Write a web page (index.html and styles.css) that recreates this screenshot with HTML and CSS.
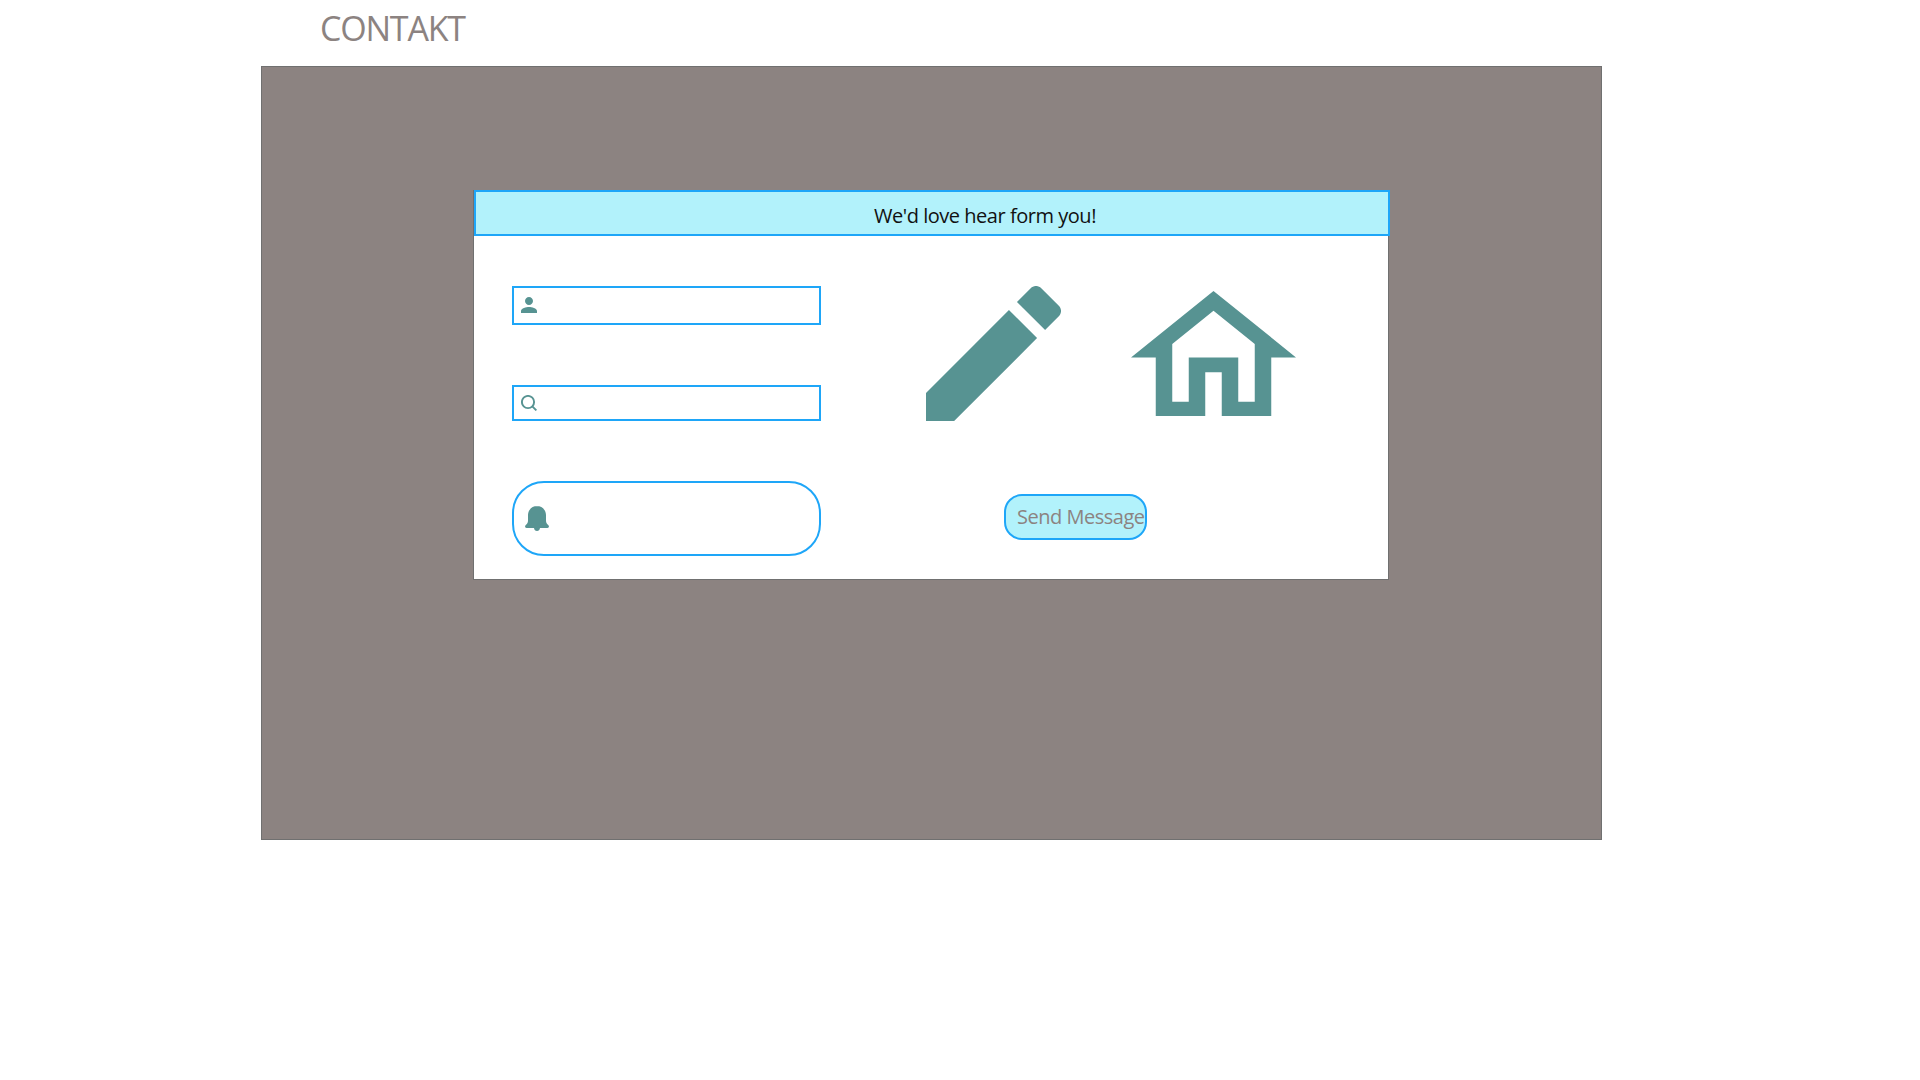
FILE: index.html
```html
<!DOCTYPE html>
<html lang="en">
<head>
<meta charset="utf-8">
<title>Kontakt</title>
<link rel="stylesheet" href="styles.css">
</head>
<body>
<h1 class="title">CONTAKT</h1>
<main class="panel">
  <section class="card">
    <h2 class="banner"><span>We'd love hear form you!</span></h2>
    <div class="content">
      <div class="fields">
        <div class="field field-name">
          <svg class="icon-person" viewBox="4 4 16 16"><path d="M12 12c2.21 0 4-1.79 4-4s-1.790-4-4-4-4 1.790-4 4 1.790 4 4 4zm0 2c-2.670 0-8 1.340-8 4v2h16v-2c0-2.660-5.330-4-8-4z"/></svg>
        </div>
        <div class="field field-search">
          <svg class="icon-search" viewBox="0 0 16 16"><circle cx="7" cy="7" r="6.100"/><path d="M11.300 11.300L15.400 15.400"/></svg>
        </div>
        <div class="field field-message">
          <svg class="icon-bell" viewBox="0 0 24 25"><path d="M12 0C7 0 3 4 3 9v5.500c0 2-.6 3-2.200 4.500C-.5 20.200 0 22 1.600 22H9c.2 1.800 1.400 3 3 3s2.800-1.200 3-3h7.400c1.600 0 2.100-1.800.8-3-1.600-1.500-2.200-2.500-2.200-4.500V9c0-5-4-9-9-9z"/></svg>
        </div>
      </div>
      <div class="side">
        <div class="pictures">
          <svg class="icon-pencil" viewBox="3 3 18 18"><path d="M3 17.250V21h3.750L17.810 9.940l-3.750-3.750L3 17.250zM20.710 7.040c.39-.39.39-1.020 0-1.410l-2.340-2.340c-.39-.39-1.020-.39-1.410 0l-1.830 1.830 3.750 3.750 1.830-1.830z"/></svg>
          <svg class="icon-home" viewBox="2 3 20 17" preserveAspectRatio="none"><path d="M12 5.690l5 4.500V18h-2v-6H9v6H7v-7.810l5-4.500M12 3L2 12h3v8h6v-6h2v6h6v-8h3L12 3z"/></svg>
        </div>
        <button class="send" type="button">Send Message</button>
      </div>
    </div>
  </section>
</main>
</body>
</html>
```
FILE: styles.css
```css
* { box-sizing: border-box; }

body {
  margin: 0;
  background: #fff;
  font-family: "Open Sans", "Noto Sans", sans-serif;
}

svg {
  display: block;
  fill: #579392;
}

.title {
  height: 66px;
  margin: 0;
  padding-left: 320px;
  font-size: 34px;
  font-weight: 400;
  line-height: 56px;
  letter-spacing: -1.2px;
  color: #8c8381;
}

.panel {
  display: flex;
  width: 1341px;
  height: 774px;
  margin-left: 261px;
  padding: 123px 0 0 211px;
  background: #8c8381;
  border: 1px solid #707070;
}

.card {
  width: 916px;
  height: 390px;
  background: #fff;
  border: 1px solid #707070;
}

.banner {
  width: 916px;
  height: 46px;
  margin: -1px 0 0;
  padding-left: 398px;
  background: #b2f2fb;
  border: 2px solid #1ea6f8;
  font-size: 20px;
  font-weight: 400;
  line-height: 47px;
  letter-spacing: -0.47px;
  white-space: nowrap;
  color: #111;
}

.content {
  display: flex;
  gap: 105px;
  padding: 50px 0 0 38px;
}

.fields {
  display: flex;
  flex-direction: column;
  gap: 60px;
  width: 309px;
}

.field {
  display: flex;
  align-items: flex-start;
  border: 2px solid #1ea6f8;
}

.field-name { height: 39px; padding: 9px 7px; }
.field-search { height: 36px; padding: 8px 7px; }
.field-message { height: 75px; padding: 23px 11px; border-radius: 32px; }

.icon-person { width: 16px; height: 16px; }
.icon-search {
  width: 16px;
  height: 16px;
  fill: none;
  stroke: #579392;
  stroke-width: 1.9;
}
.icon-bell { width: 24px; height: 25px; }

.pictures {
  display: flex;
  gap: 69.5px;
}

.icon-pencil { width: 135px; height: 135px; }
.icon-home { width: 165px; height: 125.5px; margin-top: 4.7px; }

.send {
  display: block;
  width: 143px;
  height: 46px;
  margin: 73px 0 0 78px;
  padding: 0 0 0 11px;
  background: #b2f2fb;
  border: 2px solid #1ea6f8;
  border-radius: 18px;
  font: 400 20px/42px "Open Sans", "Noto Sans", sans-serif;
  text-align: left;
  white-space: nowrap;
  letter-spacing: -0.48px;
  color: #8c8381;
}
```
